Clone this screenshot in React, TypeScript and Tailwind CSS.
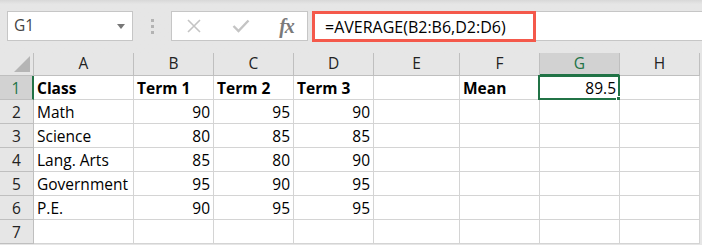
const font = { fontFamily: '"Open Sans", "Noto Sans", sans-serif' };

const columns = ["A", "B", "C", "D", "E", "F", "G", "H"];

type Row = { label: string; cells: string[]; bold?: boolean };

const rows: Row[] = [
  { label: "1", cells: ["Class", "Term 1", "Term 2", "Term 3", "", "Mean", "89.5", ""], bold: true },
  { label: "2", cells: ["Math", "90", "95", "90", "", "", "", ""] },
  { label: "3", cells: ["Science", "80", "85", "85", "", "", "", ""] },
  { label: "4", cells: ["Lang. Arts", "85", "80", "90", "", "", "", ""] },
  { label: "5", cells: ["Government", "95", "90", "95", "", "", "", ""] },
  { label: "6", cells: ["P.E.", "90", "95", "95", "", "", "", ""] },
  { label: "7", cells: ["", "", "", "", "", "", "", ""] },
];

const isNumber = (v: string) => /^[0-9.]+$/.test(v);

function FormulaBar() {
  return (
    <div className="h-[53px] bg-gradient-to-b from-[#d8d8d8] via-[#e6e6e6] via-[8%] to-[#e6e6e6] pt-[11px] flex items-start">
      {/* name box */}
      <div className="ml-[7px] w-[126px] h-[30px] bg-white border border-[#c6c6c6] flex items-center justify-between pl-[6px] pr-[7px]">
        <span className="text-[15.5px] text-[#444]">G1</span>
        <svg width="8" height="5" viewBox="0 0 8 5">
          <path d="M0 0 L8 0 L4 5 Z" fill="#777" />
        </svg>
      </div>
      <div className="w-[38px] h-[30px] flex flex-col items-center justify-center gap-[3px]">
        <div className="w-[3px] h-[3px] bg-[#b3b3b3]" />
        <div className="w-[3px] h-[3px] bg-[#b3b3b3]" />
        <div className="w-[3px] h-[3px] bg-[#b3b3b3]" />
      </div>
      {/* cancel / enter / fx */}
      <div className="w-[137px] h-[30px] bg-white border border-[#c6c6c6] flex items-center">
        <div className="w-[44px] flex justify-center">
          <svg width="16" height="16" viewBox="0 0 16 16">
            <path d="M2 2 L14 14 M14 2 L2 14" stroke="#c4c4c4" strokeWidth="1.6" />
          </svg>
        </div>
        <div className="w-[50px] flex justify-center">
          <svg width="18" height="14" viewBox="0 0 18 14">
            <path d="M1.5 7 L6.5 12 L16.5 1.5" stroke="#c4c4c4" strokeWidth="2.4" fill="none" />
          </svg>
        </div>
        <div className="flex-1 flex justify-center">
          <span
            className="text-[20px] italic font-bold text-[#7a7a7a] leading-none tracking-[-1px]"
            style={{ fontFamily: '"Liberation Serif", "DejaVu Serif", serif' }}
          >
            fx
          </span>
        </div>
      </div>
      {/* formula input */}
      <div className="ml-[4px] flex-1 h-[30px] bg-white border-y border-l border-[#c6c6c6] flex">
        <div className="-mt-px -ml-px w-[224px] h-[31px] border-[3px] border-[#f4594b] flex items-center pl-[10px]">
          <span className="text-[16px] text-black">=AVERAGE(B2:B6,D2:D6)</span>
        </div>
      </div>
    </div>
  );
}

function Grid() {
  return (
    <div className="flex bg-[#e6e6e6]">
      <div className="grid grid-cols-[34px_100px_80px_80px_80px_86px_80px_80px_80px] auto-rows-[24px] grid-rows-[23px]">
        {/* corner */}
        <div className="bg-[#e6e6e6] border-r border-b border-[#bfbfbf] flex items-end justify-end p-[3px]">
          <svg width="16" height="16" viewBox="0 0 16 16">
            <path d="M16 0 L16 16 L0 16 Z" fill="#b5b5b5" />
          </svg>
        </div>
        {columns.map((c) =>
          c === "G" ? (
            <div
              key={c}
              className="bg-[#d2d2d2] border-r border-[#bfbfbf] border-b-2 border-b-[#217346] flex items-center justify-center text-[15.5px] text-[#217346]"
            >
              {c}
            </div>
          ) : (
            <div
              key={c}
              className="bg-[#e6e6e6] border-r border-b border-[#bfbfbf] flex items-center justify-center text-[15.5px] text-[#222]"
            >
              {c}
            </div>
          )
        )}
        {rows.map((r) => [
          <div
            key={"h" + r.label}
            className={
              r.label === "1"
                ? "bg-[#d2d2d2] border-b border-[#bfbfbf] border-r-2 border-r-[#217346] flex items-center justify-center text-[15.5px] text-[#217346] pt-[2px]"
                : "bg-[#e6e6e6] border-r border-b border-[#bfbfbf] flex items-center justify-center text-[15.5px] text-[#222] pt-[2px]"
            }
          >
            {r.label}
          </div>,
          ...r.cells.map((v, i) => {
            const selected = r.label === "1" && i === 6;
            return (
              <div
                key={r.label + "-" + i}
                className={`relative bg-white border-r border-b border-[#d4d4d4] flex items-center text-[15.5px] text-black px-[3px] pt-[2px] ${
                  isNumber(v) ? "justify-end" : "justify-start"
                } ${r.bold && !isNumber(v) ? "font-bold" : ""}`}
              >
                {v}
                {selected && (
                  <>
                    <div className="absolute -left-[2px] -top-[1px] -right-[1px] -bottom-[1px] border-2 border-[#217346]" />
                    <div className="absolute -right-[3px] -bottom-[3px] w-[6px] h-[6px] bg-[#217346] border border-white" />
                  </>
                )}
              </div>
            );
          }),
        ])}
      </div>
    </div>
  );
}

export default function App() {
  return (
    <div className="w-[702px] h-[245px] overflow-hidden bg-[#e6e6e6]" style={font}>
      <FormulaBar />
      <Grid />
    </div>
  );
}
